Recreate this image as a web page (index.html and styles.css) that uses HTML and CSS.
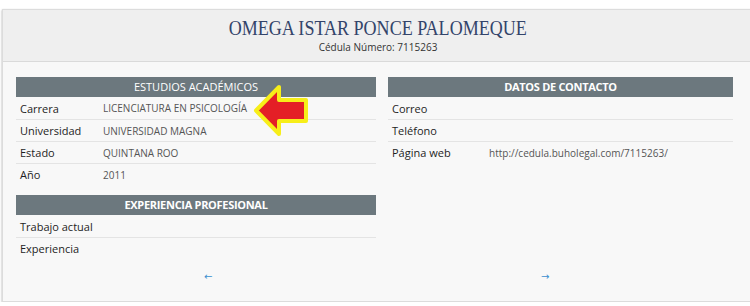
FILE: index.html
```html
<!DOCTYPE html>
<html lang="es">
<head>
<meta charset="utf-8">
<title>Cédula</title>
<link rel="stylesheet" href="styles.css">
</head>
<body>
<div class="card">
  <div class="head">
    <h1 class="title"><span class="squeeze">OMEGA ISTAR PONCE PALOMEQUE</span></h1>
    <div class="sub">Cédula Número: 7115263</div>
  </div>
  <div class="content">
    <div class="col left">
      <div class="bar">ESTUDIOS ACADÉMICOS</div>
      <div class="row"><span class="lbl">Carrera</span><span class="val">LICENCIATURA EN PSICOLOGÍA</span></div>
      <div class="row"><span class="lbl">Universidad</span><span class="val">UNIVERSIDAD MAGNA</span></div>
      <div class="row"><span class="lbl">Estado</span><span class="val">QUINTANA ROO</span></div>
      <div class="row"><span class="lbl">Año</span><span class="val">2011</span></div>
      <div class="bar bold gap">EXPERIENCIA PROFESIONAL</div>
      <div class="row"><span class="lbl">Trabajo actual</span><span class="val"></span></div>
      <div class="row"><span class="lbl">Experiencia</span><span class="val"></span></div>
    </div>
    <div class="col right">
      <div class="bar bold">DATOS DE CONTACTO</div>
      <div class="row wide"><span class="lbl">Correo</span><span class="val"></span></div>
      <div class="row wide"><span class="lbl">Teléfono</span><span class="val"></span></div>
      <div class="row wide"><span class="lbl">Página web</span><span class="val">http://cedula.buholegal.com/7115263/</span></div>
    </div>
  </div>
  <div class="pager">
    <a class="prev">&#8592;</a>
    <a class="next">&#8594;</a>
  </div>
</div>
<svg class="pointer" width="70" height="60" viewBox="250 80 70 60">
  <polygon points="256,110.5 279,87 279,100 306,100 306,121 279,121 279,134" fill="#e41f26" stroke="#f7ee19" stroke-width="4" stroke-linejoin="round"/>
</svg>
</body>
</html>
```
FILE: styles.css
```css
html, body {
  margin: 0;
  padding: 0;
  background: #ffffff;
  overflow: hidden;
}
body {
  position: relative;
  font-family: "Open Sans", "Liberation Sans", sans-serif;
  font-size: 11px;
  color: #333;
}
.card {
  margin: 9px 0 0 2px;
  width: 752px;
  height: 293px;
  box-sizing: border-box;
  border: 1px solid #dcdcdc;
  background: #f8f8f8;
  box-shadow: 0 1px 2px rgba(0,0,0,0.35);
}
.head {
  background: #efefef;
  height: 52px;
  border-bottom: 1px solid #dadada;
  text-align: center;
  padding-top: 5px;
  box-sizing: border-box;
}
.title {
  margin: 0;
  font-family: "Liberation Serif", "DejaVu Serif", serif;
  font-weight: normal;
  font-size: 22px;
  line-height: 25px;
  color: #33446a;
}
.squeeze {
  display: inline-block;
  transform: scaleX(0.82);
}
.sub {
  font-size: 10px;
  line-height: 14px;
  color: #333;
}
.content {
  display: grid;
  grid-template-columns: 360px 345px;
  column-gap: 12px;
  padding: 15px 0 0 13px;
}
.bar {
  background: #6c787e;
  color: #fff;
  height: 20px;
  line-height: 20px;
  text-align: center;
  font-size: 11px;
}
.bar.bold { font-weight: 700; letter-spacing: -0.3px; }
.bar.gap { margin-top: 10px; }
.row {
  display: flex;
  height: 22px;
  line-height: 22px;
  border-top: 1px solid #e4e4e4;
  box-sizing: border-box;
  padding-left: 4px;
}
.bar + .row { border-top: 0; line-height: 23px; }
.lbl {
  width: 83px;
  color: #1e1e1e;
}
.row.wide .lbl { width: 97px; }
.val {
  color: #555;
  font-size: 10px;
}
.pager {
  display: grid;
  grid-template-columns: 360px 345px;
  column-gap: 12px;
  padding: 10px 0 0 13px;
  line-height: 16px;
}
.pager a {
  color: #3b8fcf;
  font-size: 10px;
  font-family: "DejaVu Sans", sans-serif;
}
.prev { padding-left: 188px; }
.next { padding-left: 153px; }
.pointer {
  position: absolute;
  left: 250px;
  top: 80px;
}
```
